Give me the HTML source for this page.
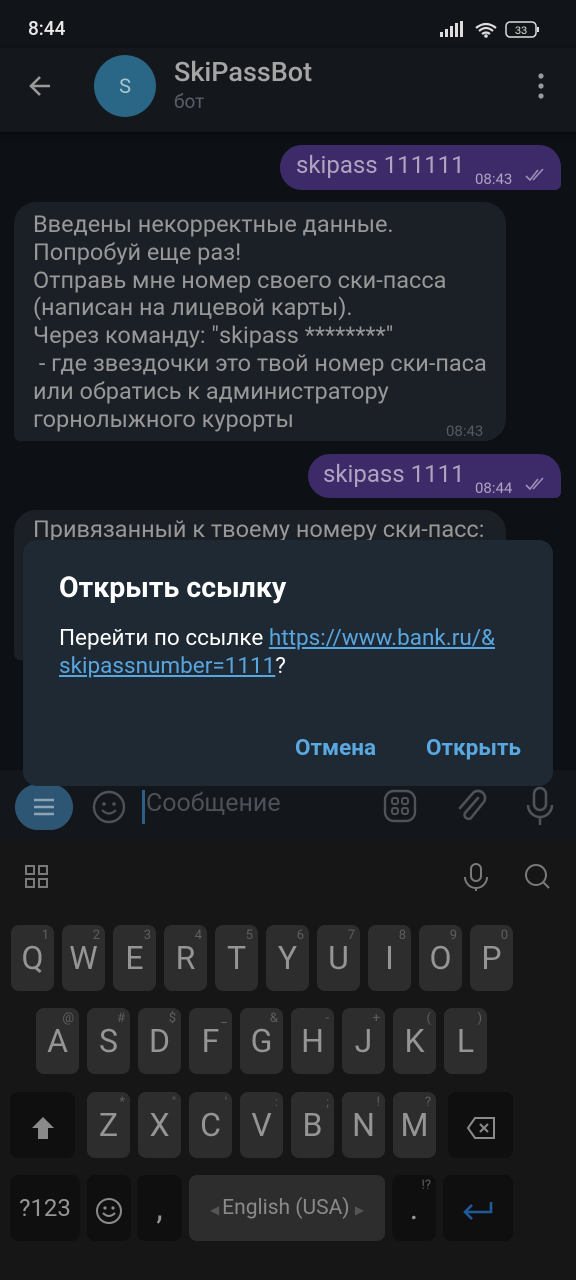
<!DOCTYPE html>
<html><head><meta charset="utf-8"><style>
*{margin:0;padding:0;box-sizing:border-box}
body{width:576px;height:1280px;background:#0d1116;font-family:"Roboto","Liberation Sans","DejaVu Sans",sans-serif;position:relative;overflow:hidden;color:#a5a5a5}
.abs{position:absolute}
.status{left:0;top:0;width:576px;height:60px;background:#111418}
.hdr{left:0;top:48px;width:576px;height:84px;background:#14181d;box-shadow:0 2px 4px rgba(0,0,0,.5)}
.bub{position:absolute;font-size:23.5px;line-height:27.8px}
.out{background:#3d2a69;color:#aea4c0;border-radius:22px 22px 6px 22px}
.in{background:#1b1f26;color:#989898;border-radius:22px 22px 22px 6px}
.time{font-size:15px;position:absolute}
.dlg{left:23px;top:540px;width:530px;height:246px;background:#1f2934;border-radius:14px;color:#fff}
.input{left:0;top:770px;width:576px;height:72px;background:#13171c}
.kb{left:0;top:842px;width:576px;height:438px;background:#161616}
.k{position:absolute;background:#2d2d2d;border-radius:8px;color:#959595;font-size:32px;text-align:center;line-height:66px;height:66px}
.k sup{position:absolute;right:5px;top:-22px;font-size:13px;color:#5e5e5e}
.d{background:#0f0f0f}
</style></head><body>
<div class="abs status"></div>
<div class="abs" style="left:28px;top:17px;font-size:19px;color:#e8e8e8;font-weight:500">8:44</div>
<svg class="abs" style="left:438px;top:20px" width="110" height="20">
<rect x="2" y="12" width="3" height="5" fill="#ddd"/><rect x="7" y="9" width="3" height="8" fill="#ddd"/><rect x="12" y="6" width="3" height="11" fill="#ddd"/><rect x="17" y="3" width="3" height="14" fill="#ddd"/><rect x="22" y="1" width="3" height="16" fill="#ddd"/>
<path d="M38 8 Q48 0 58 8 M41 11 Q48 5 55 11 M44 14 Q48 11 52 14" stroke="#ddd" stroke-width="2.2" fill="none"/><circle cx="48" cy="16" r="1.8" fill="#ddd"/>
<rect x="68" y="2" width="30" height="15" rx="4" stroke="#ddd" stroke-width="1.5" fill="none"/><rect x="99" y="7" width="2" height="5" fill="#ddd"/>
<text x="83" y="14" font-size="11" fill="#ddd" text-anchor="middle" font-family="Liberation Sans">33</text></svg>
<div class="abs hdr"></div>
<svg class="abs" style="left:26px;top:72px" width="28" height="28"><path d="M24 14H5M14 5L5 14L14 23" stroke="#9a9a9a" stroke-width="2.6" fill="none"/></svg>
<div class="abs" style="left:94px;top:55px;width:62px;height:62px;border-radius:50%;background:#2a6685;color:#a9c4d2;font-size:20px;text-align:center;line-height:62px">S</div>
<div class="abs" style="left:174px;top:56px;font-size:27px;color:#a5a5a5;font-weight:500">SkiPassBot</div>
<div class="abs" style="left:174px;top:90px;font-size:19px;color:#585f6a">бот</div>
<svg class="abs" style="left:535px;top:72px" width="12" height="28"><circle cx="6" cy="4" r="2.6" fill="#9a9a9a"/><circle cx="6" cy="14" r="2.6" fill="#9a9a9a"/><circle cx="6" cy="24" r="2.6" fill="#9a9a9a"/></svg>

<div class="bub out" style="left:280px;top:145px;width:281px;height:45px"><span class="abs" style="left:16px;top:7px;font-size:24px">skipass 111111</span><span class="time" style="left:195px;top:21px">08:43</span><svg class="abs" style="left:245px;top:23px" width="24" height="14"><path d="M1 8l4 4 8-10M8 12l10-11" stroke="#9b8fb5" stroke-width="1.6" fill="none"/></svg></div>
<div class="bub in" style="left:14px;top:202px;width:492px;height:239px;padding:9px 0 0 19px">Введены некорректные данные.<br>Попробуй еще раз!<br>Отправь мне номер своего ски-пасса<br>(написан на лицевой карты).<br>Через команду: "skipass ********"<br>&nbsp;- где звездочки это твой номер ски-паса<br>или обратись к администратору<br>горнолыжного курорты<span class="time" style="left:432px;top:216px;color:#555b63">08:43</span></div>
<div class="bub out" style="left:308px;top:454px;width:253px;height:44px"><span class="abs" style="left:15px;top:7px;font-size:24px">skipass 1111</span><span class="time" style="left:167px;top:21px">08:44</span><svg class="abs" style="left:217px;top:23px" width="24" height="14"><path d="M1 8l4 4 8-10M8 12l10-11" stroke="#9b8fb5" stroke-width="1.6" fill="none"/></svg></div>
<div class="bub in" style="left:14px;top:510px;width:492px;height:150px;padding:6px 0 0 19px">Привязанный к твоему номеру ски-пасс:</div>

<div class="abs input"></div>
<div class="abs" style="left:15px;top:784px;width:58px;height:46px;border-radius:23px;background:#2d5675"></div>
<svg class="abs" style="left:32px;top:797px" width="24" height="20"><path d="M2 3h20M2 10h20M2 17h20" stroke="#8ea3b3" stroke-width="2.6"/></svg>
<svg class="abs" style="left:91px;top:789px" width="36" height="36"><circle cx="18" cy="18" r="15" stroke="#4e535a" stroke-width="2.4" fill="none"/><circle cx="13" cy="15" r="1.8" fill="#4e535a"/><circle cx="23" cy="15" r="1.8" fill="#4e535a"/><path d="M11 21q7 7 14 0" stroke="#4e535a" stroke-width="2.2" fill="none"/></svg>
<div class="abs" style="left:142px;top:790px;width:3px;height:34px;background:#2d5f86"></div>
<div class="abs" style="left:146px;top:789px;font-size:25px;color:#4c5158">Сообщение</div>
<svg class="abs" style="left:382px;top:788px" width="36" height="36"><rect x="3" y="3" width="30" height="30" rx="9" stroke="#4e535a" stroke-width="2.4" fill="none"/><rect x="10" y="10" width="6" height="6" rx="2" stroke="#4e535a" stroke-width="2" fill="none"/><rect x="20" y="10" width="6" height="6" rx="2" stroke="#4e535a" stroke-width="2" fill="none"/><rect x="10" y="20" width="6" height="6" rx="2" stroke="#4e535a" stroke-width="2" fill="none"/><rect x="20" y="20" width="6" height="6" rx="2" stroke="#4e535a" stroke-width="2" fill="none"/></svg>
<svg class="abs" style="left:452px;top:786px" width="36" height="40"><path d="M26 12L13 27a4 4 0 0 0 6 5L31 17a7 7 0 0 0-10-10L8 22" stroke="#4e535a" stroke-width="2.6" fill="none" stroke-linecap="round"/></svg>
<svg class="abs" style="left:525px;top:785px" width="30" height="42"><rect x="9" y="3" width="12" height="22" rx="6" stroke="#4e535a" stroke-width="2.6" fill="none"/><path d="M3 20a12 12 0 0 0 24 0M15 32v8" stroke="#4e535a" stroke-width="2.6" fill="none"/></svg>

<div class="abs dlg">
<div class="abs" style="left:36px;top:31px;font-size:28.5px;font-weight:bold">Открыть ссылку</div>
<div class="abs" style="left:36px;top:84px;font-size:22.5px;line-height:28px;color:#fff;white-space:nowrap">Перейти по ссылке <span style="color:#58a6e0;text-decoration:underline">https://www.bank.ru/&amp;</span><br><span style="color:#58a6e0;text-decoration:underline">skipassnumber=1111</span>?</div>
<div class="abs" style="left:272px;top:195px;font-size:22.5px;font-weight:bold;color:#5aa8e0">Отмена</div>
<div class="abs" style="left:403px;top:195px;font-size:22.5px;font-weight:bold;color:#5aa8e0">Открыть</div>
</div>

<div class="abs kb"></div>
<svg class="abs" style="left:24px;top:864px" width="26" height="26"><rect x="2" y="2" width="8" height="8" stroke="#7a7a7a" stroke-width="2" fill="none"/><rect x="15" y="2" width="8" height="8" stroke="#7a7a7a" stroke-width="2" fill="none"/><rect x="2" y="15" width="8" height="8" stroke="#7a7a7a" stroke-width="2" fill="none"/><rect x="15" y="15" width="8" height="8" stroke="#7a7a7a" stroke-width="2" fill="none"/></svg>
<svg class="abs" style="left:462px;top:862px" width="28" height="30"><rect x="9" y="2" width="10" height="17" rx="5" stroke="#7a7a7a" stroke-width="2" fill="none"/><path d="M3 15a11 11 0 0 0 22 0M14 26v3" stroke="#7a7a7a" stroke-width="2" fill="none"/></svg>
<svg class="abs" style="left:524px;top:863px" width="28" height="28"><circle cx="12" cy="12" r="10" stroke="#7a7a7a" stroke-width="2" fill="none"/><path d="M19 19l6 6" stroke="#7a7a7a" stroke-width="2"/></svg>

<div class="k" style="left:11px;top:925px;width:43px">Q<sup>1</sup></div>
<div class="k" style="left:62px;top:925px;width:43px">W<sup>2</sup></div>
<div class="k" style="left:113px;top:925px;width:43px">E<sup>3</sup></div>
<div class="k" style="left:164px;top:925px;width:43px">R<sup>4</sup></div>
<div class="k" style="left:215px;top:925px;width:43px">T<sup>5</sup></div>
<div class="k" style="left:266px;top:925px;width:43px">Y<sup>6</sup></div>
<div class="k" style="left:317px;top:925px;width:43px">U<sup>7</sup></div>
<div class="k" style="left:368px;top:925px;width:43px">I<sup>8</sup></div>
<div class="k" style="left:419px;top:925px;width:43px">O<sup>9</sup></div>
<div class="k" style="left:470px;top:925px;width:43px">P<sup>0</sup></div>

<div class="k" style="left:36px;top:1008px;width:43px">A<sup>@</sup></div>
<div class="k" style="left:87px;top:1008px;width:43px">S<sup>#</sup></div>
<div class="k" style="left:138px;top:1008px;width:43px">D<sup>$</sup></div>
<div class="k" style="left:189px;top:1008px;width:43px">F<sup>_</sup></div>
<div class="k" style="left:240px;top:1008px;width:43px">G<sup>&amp;</sup></div>
<div class="k" style="left:291px;top:1008px;width:43px">H<sup>-</sup></div>
<div class="k" style="left:342px;top:1008px;width:43px">J<sup>+</sup></div>
<div class="k" style="left:393px;top:1008px;width:43px">K<sup>(</sup></div>
<div class="k" style="left:444px;top:1008px;width:43px">L<sup>)</sup></div>

<div class="k d" style="left:10px;top:1092px;width:65px"><svg width="28" height="28" style="vertical-align:middle"><path d="M14 3L3 14h6v11h10V14h6z" fill="#8a8a8a"/></svg></div>
<div class="k" style="left:87px;top:1092px;width:43px">Z<sup>*</sup></div>
<div class="k" style="left:138px;top:1092px;width:43px">X<sup>"</sup></div>
<div class="k" style="left:189px;top:1092px;width:43px">C<sup>'</sup></div>
<div class="k" style="left:240px;top:1092px;width:43px">V<sup>:</sup></div>
<div class="k" style="left:291px;top:1092px;width:43px">B<sup>;</sup></div>
<div class="k" style="left:342px;top:1092px;width:43px">N<sup>!</sup></div>
<div class="k" style="left:393px;top:1092px;width:43px">M<sup>?</sup></div>
<div class="k d" style="left:448px;top:1092px;width:65px"><svg width="30" height="24" style="vertical-align:middle"><path d="M9 2h19v20H9L2 12z" stroke="#8a8a8a" stroke-width="2" fill="none"/><path d="M14 8l8 8M22 8l-8 8" stroke="#8a8a8a" stroke-width="2"/></svg></div>

<div class="k d" style="left:10px;top:1175px;width:70px;font-size:24px">?123</div>
<div class="k d" style="left:87px;top:1175px;width:44px"><svg width="28" height="28" style="vertical-align:middle"><circle cx="14" cy="14" r="12" stroke="#8a8a8a" stroke-width="2" fill="none"/><circle cx="10" cy="11" r="1.6" fill="#8a8a8a"/><circle cx="18" cy="11" r="1.6" fill="#8a8a8a"/><path d="M8 16q6 6 12 0" stroke="#8a8a8a" stroke-width="2" fill="none"/></svg></div>
<div class="k d" style="left:137px;top:1175px;width:45px">,</div>
<div class="k" style="left:189px;top:1175px;width:196px;font-size:21px;color:#8a8a8a"><span style="font-size:12px;color:#555">◀ </span> English (USA) <span style="font-size:12px;color:#555"> ▶</span></div>
<div class="k d" style="left:392px;top:1175px;width:44px">.<sup>!?</sup></div>
<div class="k d" style="left:443px;top:1175px;width:70px"><svg width="34" height="22" style="vertical-align:middle"><path d="M30 2v10H4M11 5l-7 7 7 7" stroke="#1e5a9a" stroke-width="2.6" fill="none"/></svg></div>
</body></html>
